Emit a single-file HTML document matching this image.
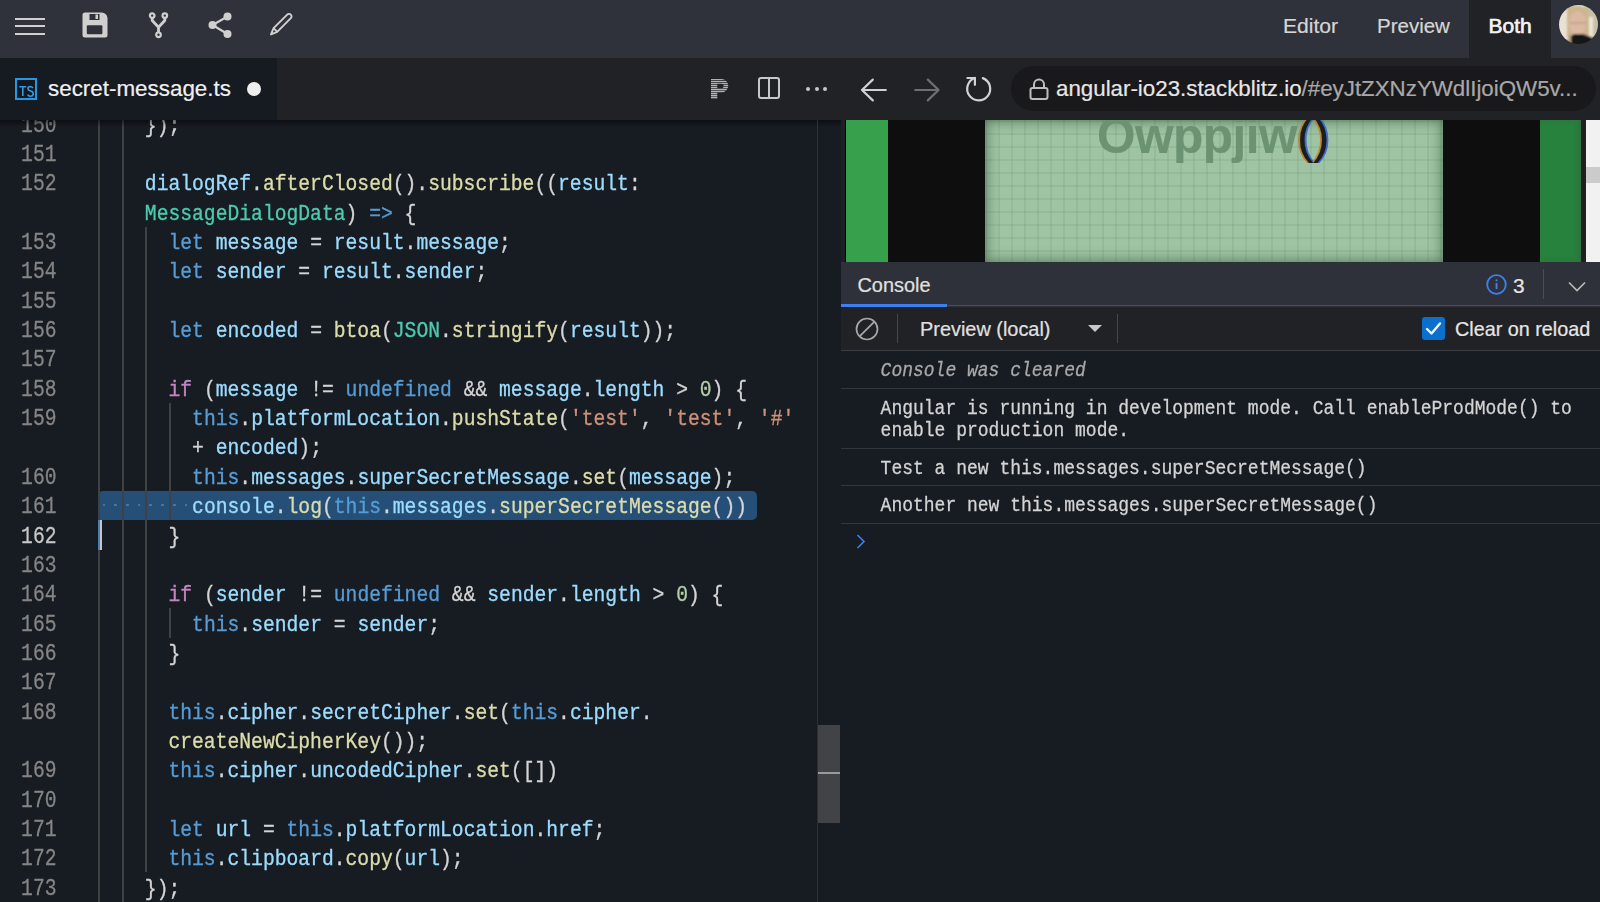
<!DOCTYPE html>
<html><head><meta charset="utf-8">
<style>
*{box-sizing:border-box;margin:0;padding:0}
html,body{width:1600px;height:902px;overflow:hidden;background:#171b22;font-family:"Liberation Sans",sans-serif;position:relative;-webkit-text-stroke:0.2px currentColor}
.abs{position:absolute}
.mono{font-family:"Liberation Mono",monospace}
.ln{left:0;width:56.5px;text-align:right;font-size:19.683px;line-height:22.297px;height:22.297px;white-space:pre;transform:scaleY(1.18);transform-origin:0 16.386px;-webkit-text-stroke:0.25px currentColor}
.code{font-size:19.683px;line-height:22.297px;height:22.297px;white-space:pre;transform:scaleY(1.08);transform-origin:0 16.386px;-webkit-text-stroke:0.3px currentColor}
#top{left:0;top:0;width:1600px;height:58px;background:#2f323a}
#tabs{left:0;top:58px;width:1600px;height:62px;background:#212226}
#acttab{left:0;top:0;width:277px;height:62px;background:#161a21}
#editor{left:0;top:0;width:841px;height:902px;background:#171b22;overflow:hidden}
svg{position:absolute;overflow:visible}
.tb{position:absolute;top:-3px;height:58px;line-height:58px;font-size:21.1px;color:#d6d6d6;white-space:nowrap}
.con{font-family:"Liberation Mono",monospace;font-size:18.0px;line-height:20.390px;height:20.390px;color:#d4d4d4;white-space:pre;position:absolute;left:880.6px;transform:scaleY(1.16);transform-origin:0 14.985px;-webkit-text-stroke:0.25px currentColor}
.sep{position:absolute;left:841px;width:759px;height:1px;background:#33363d}
</style></head><body>

<div id="editor" class="abs">
<div class="abs" style="left:99px;top:490.95px;width:658px;height:29.35px;background:#264f78;border-radius:4px 5px 5px 0"></div>
<div class="abs" style="left:98.30px;top:109.40px;width:1.7px;height:792.45px;background:#404142"></div>
<div class="abs" style="left:121.90px;top:109.40px;width:1.7px;height:792.45px;background:#404142"></div>
<div class="abs" style="left:145.20px;top:226.80px;width:1.7px;height:645.70px;background:#404142"></div>
<div class="abs" style="left:169.00px;top:402.90px;width:1.7px;height:117.40px;background:#404142"></div>
<div class="abs" style="left:169.00px;top:608.35px;width:1.7px;height:29.35px;background:#404142"></div>
<div class="abs" style="left:102.50px;top:503.53px;width:2.6px;height:2.6px;background:#52759a;border-radius:0.5px"></div>
<div class="abs" style="left:114.24px;top:503.53px;width:2.6px;height:2.6px;background:#52759a;border-radius:0.5px"></div>
<div class="abs" style="left:125.98px;top:503.53px;width:2.6px;height:2.6px;background:#52759a;border-radius:0.5px"></div>
<div class="abs" style="left:137.72px;top:503.53px;width:2.6px;height:2.6px;background:#52759a;border-radius:0.5px"></div>
<div class="abs" style="left:149.46px;top:503.53px;width:2.6px;height:2.6px;background:#52759a;border-radius:0.5px"></div>
<div class="abs" style="left:161.20px;top:503.53px;width:2.6px;height:2.6px;background:#52759a;border-radius:0.5px"></div>
<div class="abs" style="left:172.94px;top:503.53px;width:2.6px;height:2.6px;background:#52759a;border-radius:0.5px"></div>
<div class="abs" style="left:184.68px;top:503.53px;width:2.6px;height:2.6px;background:#52759a;border-radius:0.5px"></div>
<div class="abs" style="left:98.3px;top:520.30px;width:1.8px;height:29.35px;background:#4d7db5"></div><div class="abs" style="left:100.1px;top:520.30px;width:1.9px;height:29.35px;background:#c4c6c8"></div>
<div class="abs mono ln" style="top:115.61px;color:#858585">150</div>
<div class="abs mono code" style="left:144.84px;top:115.61px"><span style="color:#d4d4d4">});</span></div>
<div class="abs mono ln" style="top:144.96px;color:#858585">151</div>
<div class="abs mono ln" style="top:174.31px;color:#858585">152</div>
<div class="abs mono code" style="left:144.84px;top:174.31px"><span style="color:#9cdcfe">dialogRef</span><span style="color:#d4d4d4">.</span><span style="color:#dcdcaa">afterClosed</span><span style="color:#d4d4d4">().</span><span style="color:#dcdcaa">subscribe</span><span style="color:#d4d4d4">((</span><span style="color:#9cdcfe">result</span><span style="color:#d4d4d4">:</span></div>
<div class="abs mono code" style="left:144.84px;top:203.66px"><span style="color:#4ec9b0">MessageDialogData</span><span style="color:#d4d4d4">) </span><span style="color:#569cd6">=&gt;</span><span style="color:#d4d4d4"> {</span></div>
<div class="abs mono ln" style="top:233.01px;color:#858585">153</div>
<div class="abs mono code" style="left:168.46px;top:233.01px"><span style="color:#569cd6">let</span><span style="color:#d4d4d4"> </span><span style="color:#9cdcfe">message</span><span style="color:#d4d4d4"> = </span><span style="color:#9cdcfe">result</span><span style="color:#d4d4d4">.</span><span style="color:#9cdcfe">message</span><span style="color:#d4d4d4">;</span></div>
<div class="abs mono ln" style="top:262.36px;color:#858585">154</div>
<div class="abs mono code" style="left:168.46px;top:262.36px"><span style="color:#569cd6">let</span><span style="color:#d4d4d4"> </span><span style="color:#9cdcfe">sender</span><span style="color:#d4d4d4"> = </span><span style="color:#9cdcfe">result</span><span style="color:#d4d4d4">.</span><span style="color:#9cdcfe">sender</span><span style="color:#d4d4d4">;</span></div>
<div class="abs mono ln" style="top:291.71px;color:#858585">155</div>
<div class="abs mono ln" style="top:321.06px;color:#858585">156</div>
<div class="abs mono code" style="left:168.46px;top:321.06px"><span style="color:#569cd6">let</span><span style="color:#d4d4d4"> </span><span style="color:#9cdcfe">encoded</span><span style="color:#d4d4d4"> = </span><span style="color:#dcdcaa">btoa</span><span style="color:#d4d4d4">(</span><span style="color:#4ec9b0">JSON</span><span style="color:#d4d4d4">.</span><span style="color:#dcdcaa">stringify</span><span style="color:#d4d4d4">(</span><span style="color:#9cdcfe">result</span><span style="color:#d4d4d4">));</span></div>
<div class="abs mono ln" style="top:350.41px;color:#858585">157</div>
<div class="abs mono ln" style="top:379.76px;color:#858585">158</div>
<div class="abs mono code" style="left:168.46px;top:379.76px"><span style="color:#c586c0">if</span><span style="color:#d4d4d4"> (</span><span style="color:#9cdcfe">message</span><span style="color:#d4d4d4"> != </span><span style="color:#569cd6">undefined</span><span style="color:#d4d4d4"> &amp;&amp; </span><span style="color:#9cdcfe">message</span><span style="color:#d4d4d4">.</span><span style="color:#9cdcfe">length</span><span style="color:#d4d4d4"> &gt; </span><span style="color:#b5cea8">0</span><span style="color:#d4d4d4">) {</span></div>
<div class="abs mono ln" style="top:409.11px;color:#858585">159</div>
<div class="abs mono code" style="left:192.08px;top:409.11px"><span style="color:#569cd6">this</span><span style="color:#d4d4d4">.</span><span style="color:#9cdcfe">platformLocation</span><span style="color:#d4d4d4">.</span><span style="color:#dcdcaa">pushState</span><span style="color:#d4d4d4">(</span><span style="color:#ce9178">&#x27;test&#x27;</span><span style="color:#d4d4d4">, </span><span style="color:#ce9178">&#x27;test&#x27;</span><span style="color:#d4d4d4">, </span><span style="color:#ce9178">&#x27;#&#x27;</span></div>
<div class="abs mono code" style="left:192.08px;top:438.46px"><span style="color:#d4d4d4">+ </span><span style="color:#9cdcfe">encoded</span><span style="color:#d4d4d4">);</span></div>
<div class="abs mono ln" style="top:467.81px;color:#858585">160</div>
<div class="abs mono code" style="left:192.08px;top:467.81px"><span style="color:#569cd6">this</span><span style="color:#d4d4d4">.</span><span style="color:#9cdcfe">messages</span><span style="color:#d4d4d4">.</span><span style="color:#9cdcfe">superSecretMessage</span><span style="color:#d4d4d4">.</span><span style="color:#dcdcaa">set</span><span style="color:#d4d4d4">(</span><span style="color:#9cdcfe">message</span><span style="color:#d4d4d4">);</span></div>
<div class="abs mono ln" style="top:497.16px;color:#858585">161</div>
<div class="abs mono code" style="left:192.08px;top:497.16px"><span style="color:#9cdcfe">console</span><span style="color:#d4d4d4">.</span><span style="color:#dcdcaa">log</span><span style="color:#d4d4d4">(</span><span style="color:#569cd6">this</span><span style="color:#d4d4d4">.</span><span style="color:#9cdcfe">messages</span><span style="color:#d4d4d4">.</span><span style="color:#dcdcaa">superSecretMessage</span><span style="color:#d4d4d4">())</span></div>
<div class="abs mono ln" style="top:526.51px;color:#c6c6c6">162</div>
<div class="abs mono code" style="left:168.46px;top:526.51px"><span style="color:#d4d4d4">}</span></div>
<div class="abs mono ln" style="top:555.86px;color:#858585">163</div>
<div class="abs mono ln" style="top:585.21px;color:#858585">164</div>
<div class="abs mono code" style="left:168.46px;top:585.21px"><span style="color:#c586c0">if</span><span style="color:#d4d4d4"> (</span><span style="color:#9cdcfe">sender</span><span style="color:#d4d4d4"> != </span><span style="color:#569cd6">undefined</span><span style="color:#d4d4d4"> &amp;&amp; </span><span style="color:#9cdcfe">sender</span><span style="color:#d4d4d4">.</span><span style="color:#9cdcfe">length</span><span style="color:#d4d4d4"> &gt; </span><span style="color:#b5cea8">0</span><span style="color:#d4d4d4">) {</span></div>
<div class="abs mono ln" style="top:614.56px;color:#858585">165</div>
<div class="abs mono code" style="left:192.08px;top:614.56px"><span style="color:#569cd6">this</span><span style="color:#d4d4d4">.</span><span style="color:#9cdcfe">sender</span><span style="color:#d4d4d4"> = </span><span style="color:#9cdcfe">sender</span><span style="color:#d4d4d4">;</span></div>
<div class="abs mono ln" style="top:643.91px;color:#858585">166</div>
<div class="abs mono code" style="left:168.46px;top:643.91px"><span style="color:#d4d4d4">}</span></div>
<div class="abs mono ln" style="top:673.26px;color:#858585">167</div>
<div class="abs mono ln" style="top:702.61px;color:#858585">168</div>
<div class="abs mono code" style="left:168.46px;top:702.61px"><span style="color:#569cd6">this</span><span style="color:#d4d4d4">.</span><span style="color:#9cdcfe">cipher</span><span style="color:#d4d4d4">.</span><span style="color:#9cdcfe">secretCipher</span><span style="color:#d4d4d4">.</span><span style="color:#dcdcaa">set</span><span style="color:#d4d4d4">(</span><span style="color:#569cd6">this</span><span style="color:#d4d4d4">.</span><span style="color:#9cdcfe">cipher</span><span style="color:#d4d4d4">.</span></div>
<div class="abs mono code" style="left:168.46px;top:731.96px"><span style="color:#dcdcaa">createNewCipherKey</span><span style="color:#d4d4d4">());</span></div>
<div class="abs mono ln" style="top:761.31px;color:#858585">169</div>
<div class="abs mono code" style="left:168.46px;top:761.31px"><span style="color:#569cd6">this</span><span style="color:#d4d4d4">.</span><span style="color:#9cdcfe">cipher</span><span style="color:#d4d4d4">.</span><span style="color:#9cdcfe">uncodedCipher</span><span style="color:#d4d4d4">.</span><span style="color:#dcdcaa">set</span><span style="color:#d4d4d4">([])</span></div>
<div class="abs mono ln" style="top:790.66px;color:#858585">170</div>
<div class="abs mono ln" style="top:820.01px;color:#858585">171</div>
<div class="abs mono code" style="left:168.46px;top:820.01px"><span style="color:#569cd6">let</span><span style="color:#d4d4d4"> </span><span style="color:#9cdcfe">url</span><span style="color:#d4d4d4"> = </span><span style="color:#569cd6">this</span><span style="color:#d4d4d4">.</span><span style="color:#9cdcfe">platformLocation</span><span style="color:#d4d4d4">.</span><span style="color:#9cdcfe">href</span><span style="color:#d4d4d4">;</span></div>
<div class="abs mono ln" style="top:849.36px;color:#858585">172</div>
<div class="abs mono code" style="left:168.46px;top:849.36px"><span style="color:#569cd6">this</span><span style="color:#d4d4d4">.</span><span style="color:#9cdcfe">clipboard</span><span style="color:#d4d4d4">.</span><span style="color:#dcdcaa">copy</span><span style="color:#d4d4d4">(</span><span style="color:#9cdcfe">url</span><span style="color:#d4d4d4">);</span></div>
<div class="abs mono ln" style="top:878.71px;color:#858585">173</div>
<div class="abs mono code" style="left:144.84px;top:878.71px"><span style="color:#d4d4d4">});</span></div>
<div class="abs" style="left:0;top:120px;width:841px;height:7px;background:linear-gradient(rgba(0,0,0,.5),rgba(0,0,0,0))"></div>
<div class="abs" style="left:817px;top:120px;width:1px;height:782px;background:#2c2f35"></div>
<div class="abs" style="left:818px;top:725px;width:22px;height:98px;background:#424347"></div>
<div class="abs" style="left:818px;top:771.5px;width:22px;height:2px;background:#9a9a9a"></div>
</div>

<!-- top bar -->
<div id="top" class="abs">
  <!-- hamburger -->
  <div class="abs" style="left:15px;top:18px;width:30px;height:2.2px;background:#d0d0d0"></div>
  <div class="abs" style="left:15px;top:25.2px;width:30px;height:2.2px;background:#d0d0d0"></div>
  <div class="abs" style="left:15px;top:32.7px;width:30px;height:2.2px;background:#d0d0d0"></div>
  <!-- save -->
  <svg style="left:82px;top:12px" width="26" height="26" viewBox="0 0 26 26">
    <path d="M3 0.5h16.5a6 6 0 0 1 6 5.5v17a2.5 2.5 0 0 1-2.5 2.5h-20a2.5 2.5 0 0 1-2.5-2.5v-20a2.5 2.5 0 0 1 2.5-2.5z" fill="#d0d0d0"/>
    <rect x="7.5" y="2" width="10" height="6" fill="#2f323a"/>
    <rect x="13.5" y="2.5" width="2.5" height="4.5" fill="#d0d0d0"/>
    <rect x="4.8" y="13.3" width="15.6" height="9" rx="1" fill="#2f323a"/>
  </svg>
  <!-- fork -->
  <svg style="left:148px;top:12px" width="22" height="27" viewBox="0 0 22 27">
    <circle cx="4.2" cy="3.6" r="2.3" fill="none" stroke="#d0d0d0" stroke-width="2.2"/>
    <circle cx="16.8" cy="3.6" r="2.3" fill="none" stroke="#d0d0d0" stroke-width="2.2"/>
    <circle cx="10.5" cy="22.8" r="2.3" fill="none" stroke="#d0d0d0" stroke-width="2.2"/>
    <path d="M4.2 5.8V8.5L10.5 15.2V20.5M16.8 5.8V8.5L10.5 15.2" fill="none" stroke="#d0d0d0" stroke-width="2.8" stroke-linejoin="round"/>
  </svg>
  <!-- share -->
  <svg style="left:208px;top:12px" width="26" height="27" viewBox="0 0 26 27">
    <circle cx="19.5" cy="4.5" r="4" fill="#d0d0d0"/>
    <circle cx="4.5" cy="13" r="4" fill="#d0d0d0"/>
    <circle cx="19.5" cy="22" r="4" fill="#d0d0d0"/>
    <path d="M19.5 4.5L4.5 13L19.5 22" fill="none" stroke="#d0d0d0" stroke-width="2.2"/>
  </svg>
  <!-- pencil -->
  <svg style="left:268px;top:12px" width="26" height="26" viewBox="0 0 26 26">
    <path d="M5.6 16.2L19.2 2.6A2.5 2.5 0 0 1 22.8 6.2L9.2 19.8L3 22.4Z M5.6 16.2L9.2 19.8" fill="none" stroke="#d0d0d0" stroke-width="1.9" stroke-linejoin="round"/>
  </svg>
  <div class="tb" style="left:1283px">Editor</div>
  <div class="tb" style="left:1377px;font-size:20.5px">Preview</div>
  <div class="abs" style="left:1469px;top:0;width:82px;height:58px;background:#212226"></div>
  <div class="tb" style="left:1488.5px;font-size:21px;color:#f4f4f4;-webkit-text-stroke:0.65px #f4f4f4">Both</div>
  <!-- avatar -->
  <svg style="left:1559px;top:5px" width="39" height="39" viewBox="0 0 39 39">
    <defs><clipPath id="cc"><circle cx="19.5" cy="19.5" r="19.5"/></clipPath>
    <filter id="bl" x="-10%" y="-10%" width="120%" height="120%"><feGaussianBlur stdDeviation="0.9"/></filter></defs>
    <g clip-path="url(#cc)"><g filter="url(#bl)">
      <rect x="-2" y="-2" width="43" height="43" fill="#e9e2d2"/>
      <rect x="26" y="-2" width="15" height="43" fill="#c7bfa8"/>
      <rect x="30" y="12" width="4" height="22" fill="#ece6d6"/>
      <path d="M8 2 Q19 -2 29 4 L30 30 L8 32Z" fill="#cdb58e"/>
      <ellipse cx="18.5" cy="18" rx="8.3" ry="12" fill="#dcb9a3"/>
      <rect x="11" y="17" width="16" height="2" fill="#b08f78" opacity=".5"/>
      <path d="M5 44 L9 34 Q13 30 15 29 L24 29 Q30 31 37 34 L40 44Z" fill="#151515"/>
      <rect x="9" y="30" width="3" height="12" fill="#b9a27c"/>
    </g></g>
  </svg>
</div>

<!-- tab bar -->
<div id="tabs" class="abs">
  <div id="acttab" class="abs"></div>
  <div class="abs" style="left:15px;top:20px;width:22px;height:22px;border:2px solid #2597e6;background:#16181c"></div>
  <svg style="left:15px;top:20px" width="22" height="22" viewBox="0 0 22 22"><path d="M4.3 8.7H11.3M7.8 8.7V18" fill="none" stroke="#2a9df0" stroke-width="1.6"/><path d="M17.9 10Q17 8.5 15.2 8.5Q12.9 8.6 12.9 10.8Q13 12.4 15.5 13Q18.4 13.7 18.3 15.9Q18.1 18.2 15.4 18.2Q13.4 18.1 12.6 16.6" fill="none" stroke="#2a9df0" stroke-width="1.6"/></svg>
  <div class="abs" style="left:48px;top:0;height:62px;line-height:62px;font-size:22.4px;color:#f0f0f0;white-space:nowrap">secret-message.ts</div>
  <div class="abs" style="left:247px;top:24px;width:14px;height:14px;border-radius:50%;background:#eeeeee"></div>

  <!-- prettier P -->
  <svg style="left:710.5px;top:21px" width="19" height="21" viewBox="0 0 19 21"><defs><pattern id="st" width="19" height="2.02" patternUnits="userSpaceOnUse"><rect y="0.1" width="19" height="1.05" fill="#cfcfcf"/></pattern></defs><path d="M0 0H10.5A6.75 6.75 0 0 1 10.5 13.5H6.3V19.8H0Z M6.3 4.8H10.5A2.2 2.2 0 0 1 10.5 9.2H6.3Z" fill="url(#st)" fill-rule="evenodd"/></svg>
  <!-- split -->
  <div class="abs" style="left:758px;top:19px;width:22px;height:22px;border:2px solid #c8c8c8;border-radius:3px"></div>
  <div class="abs" style="left:768px;top:19px;width:2px;height:22px;background:#c8c8c8"></div>
  <!-- dots -->
  <div class="abs" style="left:806px;top:29px;width:4px;height:4px;border-radius:50%;background:#c8c8c8"></div>
  <div class="abs" style="left:814.5px;top:29px;width:4px;height:4px;border-radius:50%;background:#c8c8c8"></div>
  <div class="abs" style="left:823px;top:29px;width:4px;height:4px;border-radius:50%;background:#c8c8c8"></div>
  <!-- back -->
  <svg style="left:860px;top:20.5px" width="28" height="22" viewBox="0 0 28 22">
    <path d="M25.8 11H2M12.8 0.6L2 11L12.8 21.4" fill="none" stroke="#d2d2d2" stroke-width="2.2" stroke-linecap="round" stroke-linejoin="round"/>
  </svg>
  <!-- forward -->
  <svg style="left:913px;top:20.5px" width="28" height="22" viewBox="0 0 28 22">
    <path d="M2.2 11H25.6M14.8 0.6L25.6 11L14.8 21.4" fill="none" stroke="#6e6f73" stroke-width="2.2" stroke-linecap="round" stroke-linejoin="round"/>
  </svg>
  <!-- reload -->
  <svg style="left:964.7px;top:17px" width="28" height="28" viewBox="0 0 28 28">
    <path d="M17.8 3.1A11.5 11.5 0 1 1 9.9 3.0" fill="none" stroke="#d2d2d2" stroke-width="2.2" stroke-linecap="round"/>
    <path d="M2.4 3h7.5v6.8" fill="none" stroke="#d2d2d2" stroke-width="2.2" stroke-linecap="round" stroke-linejoin="round"/>
  </svg>
  <!-- url pill -->
  <div class="abs" style="left:1011px;top:8px;width:585px;height:45px;border-radius:22.5px;background:#19191c"></div>
  <svg style="left:1029px;top:20px" width="20" height="22" viewBox="0 0 20 22">
    <path d="M5 10V6.5a5 5 0 0 1 10 0V10" fill="none" stroke="#bdbdbd" stroke-width="2"/>
    <rect x="1.5" y="10" width="17" height="11" rx="2" fill="none" stroke="#bdbdbd" stroke-width="2"/>
  </svg>
  <div class="abs" style="left:1056px;top:0;height:62px;line-height:62px;font-size:22.32px;color:#e6e6e6;white-space:nowrap">angular-io23.stackblitz.io<span style="color:#a8a8a8">/#eyJtZXNzYWdlIjoiQW5v...</span></div>
</div>

<!-- right pane -->
<div class="abs" style="left:841px;top:120px;width:759px;height:782px;background:#171b22"></div>
<!-- preview -->
<div class="abs" style="left:841px;top:120px;width:759px;height:142px;background:#1f2024;overflow:hidden">
  <div class="abs" style="left:4px;top:0;width:1px;height:142px;background:#000"></div>
  <div class="abs" style="left:5px;top:0;width:42px;height:142px;background:#37a04d"></div>
  <div class="abs" style="left:47px;top:0;width:97px;height:142px;background:#0e0e0e"></div>
  <div class="abs" style="left:144px;top:0;width:458px;height:142px;background-color:#9ec4a4;background-image:linear-gradient(90deg,rgba(80,120,85,.13) 2px,transparent 2px),linear-gradient(rgba(80,120,85,.13) 2px,transparent 2px);background-size:13px 13px;box-shadow:inset 0 0 14px rgba(50,80,55,.75)"></div>
  <div class="abs" style="left:256px;top:-15px;font-size:49.5px;font-weight:bold;color:#6b9373;line-height:62px;letter-spacing:-0.5px;white-space:nowrap">Owppjiw<span style="color:#1a1f1c;font-weight:normal;text-shadow:-2px 0 0 rgba(200,120,30,.8),2px 0 0 rgba(40,90,220,.8)">()</span></div>
  <div class="abs" style="left:602px;top:0;width:97px;height:142px;background:#0e0e0e"></div>
  <div class="abs" style="left:699px;top:0;width:41px;height:142px;background:#26823c;box-shadow:inset -3px 0 4px rgba(70,90,70,.5)"></div>
  <div class="abs" style="left:745px;top:0;width:14px;height:142px;background:#f1f1f1"></div>
  <div class="abs" style="left:745px;top:47px;width:14px;height:15.5px;background:#cbcbcb"></div>
</div>

<!-- console header -->
<div class="abs" style="left:841px;top:262px;width:759px;height:45px;background:#2e3139"></div>
<div class="abs" style="left:857.5px;top:263px;height:45px;line-height:45px;font-size:19.9px;color:#e0e0e0">Console</div>
<div class="abs" style="left:841px;top:304px;width:106px;height:3px;background:#3d7ff0"></div>
<div class="abs" style="left:947px;top:305px;width:653px;height:1px;background:#4a4d55"></div>
<svg style="left:1486px;top:274px" width="21" height="21" viewBox="0 0 21 21">
  <circle cx="10.5" cy="10.5" r="9.3" fill="none" stroke="#3b82f0" stroke-width="1.8"/>
  <rect x="9.6" y="9" width="1.9" height="6" fill="#3b82f0"/>
  <circle cx="10.5" cy="6.3" r="1.1" fill="#3b82f0"/>
</svg>
<div class="abs" style="left:1513px;top:263px;height:45px;line-height:45px;font-size:20.8px;color:#e6e6e6">3</div>
<div class="abs" style="left:1543px;top:269px;width:1px;height:30px;background:#4a4d55"></div>
<svg style="left:1568px;top:281px" width="18" height="11" viewBox="0 0 18 11">
  <path d="M1 1.5L9 9.5L17 1.5" fill="none" stroke="#bdbdbd" stroke-width="1.6"/>
</svg>

<!-- console toolbar -->
<div class="abs" style="left:841px;top:307px;width:759px;height:43px;background:#212226"></div>
<div class="abs" style="left:841px;top:350px;width:759px;height:1px;background:#3a3d44"></div>
<svg style="left:855px;top:317px" width="24" height="24" viewBox="0 0 24 24">
  <circle cx="12" cy="12" r="10.5" fill="none" stroke="#a8a8a8" stroke-width="1.7"/>
  <path d="M4.6 19.4L19.4 4.6" stroke="#a8a8a8" stroke-width="1.7"/>
</svg>
<div class="abs" style="left:897px;top:314px;width:1px;height:29px;background:#45474d"></div>
<div class="abs" style="left:920px;top:307.8px;height:43px;line-height:43px;font-size:19.9px;color:#e0e0e0;white-space:nowrap">Preview (local)</div>
<svg style="left:1088px;top:325px" width="14" height="7" viewBox="0 0 14 7"><path d="M0 0H14L7 7z" fill="#c8c8c8"/></svg>
<div class="abs" style="left:1117px;top:314px;width:1px;height:29px;background:#45474d"></div>
<div class="abs" style="left:1422px;top:317px;width:23px;height:23px;border-radius:3px;background:#0b6fce"></div>
<svg style="left:1422px;top:317px" width="23" height="23" viewBox="0 0 23 23"><path d="M5 12L9.5 16.5L18 6.5" fill="none" stroke="#f4f4f4" stroke-width="2.4" stroke-linecap="round" stroke-linejoin="round"/></svg>
<div class="abs" style="left:1455px;top:307.6px;height:43px;line-height:43px;font-size:19.8px;color:#e6e6e6;white-space:nowrap">Clear on reload</div>

<!-- console messages -->
<div class="con" style="top:360.51px;font-style:italic;color:#a9a9a9">Console was cleared</div>
<div class="con" style="top:398.62px;">Angular is running in development mode. Call enableProdMode() to</div>
<div class="con" style="top:421.12px;">enable production mode.</div>
<div class="con" style="top:458.62px;">Test a new this.messages.superSecretMessage()</div>
<div class="con" style="top:495.81px;">Another new this.messages.superSecretMessage()</div>
<div class="sep" style="top:388px"></div>
<div class="sep" style="top:448px"></div>
<div class="sep" style="top:485px"></div>
<div class="sep" style="top:523px"></div>
<svg style="left:856px;top:534px" width="10" height="15" viewBox="0 0 10 15"><path d="M1.5 1L8 7.5L1.5 14" fill="none" stroke="#3b82f0" stroke-width="1.6"/></svg>

</body></html>
